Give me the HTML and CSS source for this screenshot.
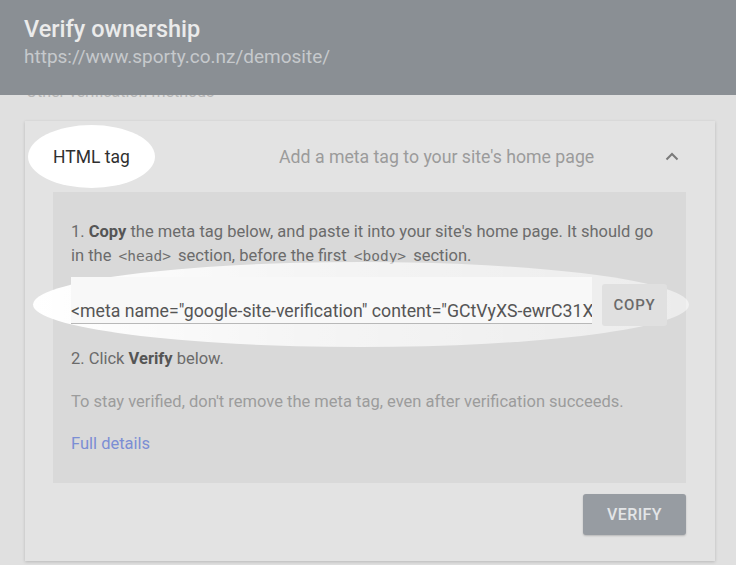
FILE: index.html
```html
<!DOCTYPE html>
<html lang="en">

<head>
    <meta charset="UTF-8">
    <meta name="viewport" content="width=device-width, initial-scale=1">
    <title>Verify ownership</title>
    <link rel="stylesheet" href="styles.css">
</head>

<body>
    <header class="topbar">
        <h1 class="topbar-title">Verify ownership</h1>
        <div class="topbar-url">https://www.sporty.co.nz/demosite/</div>
    </header>

    <!-- label scrolled mostly under the header -->
    <div class="section-peek">
        <div class="section-label">Other verification methods</div>
    </div>

    <div class="method-card">
        <div class="method-head">
            <div class="method-name">HTML tag</div>
            <div class="method-desc">Add a meta tag to your site's home page</div>
            <svg class="chevron" width="14" height="9" viewBox="0 0 14 9">
                <path d="M1.5 7.5 L7 2 L12.5 7.5" fill="none" stroke="#7a7a7a" stroke-width="2"/>
            </svg>
        </div>

        <div class="method-body">
            <p class="step">1. <b>Copy</b> the meta tag below, and paste it into your site's home page. It should go in the <code>&lt;head&gt;</code> section, before the first <code>&lt;body&gt;</code> section.</p>

            <div class="tag-row">
                <div class="tag-field">&lt;meta name="google-site-verification" content="GCtVyXS-ewrC31XqL8mPzR2aUo7hJkD4nBvYtEwF9sQ" /&gt;</div>
                <button class="copy-btn">COPY</button>
            </div>

            <p class="step step-two">2. Click <b>Verify</b> below.</p>
            <p class="note">To stay verified, don't remove the meta tag, even after verification succeeds.</p>
            <a class="details-link" href="#">Full details</a>
        </div>

        <div class="card-actions">
            <button class="verify-btn">VERIFY</button>
        </div>
    </div>
</body>

</html>
```

FILE: styles.css
```css
* {
    margin: 0;
    padding: 0;
    box-sizing: border-box;
}

body {
    font-family: Roboto, 'Noto Sans', sans-serif;
    background-color: #e0e0e0;
    width: 736px;
    height: 565px;
    overflow: hidden;
}

/* Header */
.topbar {
    height: 95px;
    background-color: #8a8f94;
    padding: 15px 24px 0;
}

.topbar-title {
    font-size: 23.5px;
    font-weight: 500;
    color: #ebebeb;
    line-height: 29px;
}

.topbar-url {
    font-size: 19px;
    color: #c6c9cc;
    line-height: 24px;
    margin-top: 1px;
}

.section-peek {
    height: 4px;
    overflow: hidden;
    padding-left: 26px;
}

.section-label {
    font-size: 16px;
    line-height: 18px;
    margin-top: -12px;
    color: #b5b5b5;
}

/* Card */
.method-card {
    margin: 22px 21px 0 25px;
    background-color: #e3e3e3;
    box-shadow: 0 1px 3px rgba(0, 0, 0, 0.18);
    padding: 0 29px 26px 28px;
}

.method-head {
    display: flex;
    align-items: center;
    padding: 4px 0;
}

.method-name {
    width: 127px;
    height: 63px;
    margin-left: -25px;
    padding-left: 25px;
    display: flex;
    align-items: center;
    background-color: #fff;
    border-radius: 50%;
    font-size: 17.5px;
    color: #2f2f2f;
}

.method-desc {
    flex: 1;
    margin-left: 124px;
    font-size: 17.7px;
    color: #9b9b9b;
}

.chevron {
    margin-right: 7px;
}

.method-body {
    background-color: #d9d9d9;
    padding: 28px 25px 27px 18px;
}

.step {
    font-size: 16.5px;
    line-height: 24px;
    color: #6b6b6b;
}

.step b {
    color: #555;
    font-weight: 700;
}

.step code {
    font-family: 'DejaVu Sans Mono', monospace;
    font-size: 14.5px;
    line-height: 1;
    padding: 0 3px;
    color: #6e6e6e;
}

/* highlighted tag row */
.tag-row {
    position: relative;
    isolation: isolate;
    display: flex;
    align-items: flex-start;
    margin-top: 9px;
}

.tag-row::before {
    content: '';
    position: absolute;
    left: -38px;
    right: -28px;
    top: -15px;
    bottom: -21px;
    border-radius: 50%;
    background: linear-gradient(90deg, #ffffff 0%, rgba(255, 255, 255, 0.75) 40%, rgba(255, 255, 255, 0.5) 100%);
    z-index: -1;
}

.tag-field {
    width: 521px;
    flex-shrink: 0;
    height: 47px;
    padding-top: 24px;
    background-color: #f8f8f8;
    border-bottom: 1px solid #b8b8b8;
    font-size: 17.7px;
    line-height: 20px;
    color: #555;
    white-space: nowrap;
    overflow: hidden;
}

.copy-btn {
    flex-shrink: 0;
    margin: 7px 0 0 10px;
    width: 65px;
    height: 42px;
    border: none;
    border-radius: 3px;
    background-color: #e0e0e0;
    font-family: inherit;
    font-size: 15px;
    font-weight: 500;
    letter-spacing: 0.8px;
    color: #6a6a6a;
}

.step-two {
    margin-top: 21px;
}

.note {
    margin-top: 19px;
    font-size: 16.5px;
    line-height: 24px;
    color: #9c9c9c;
}

.details-link {
    display: block;
    margin-top: 18px;
    font-size: 16.5px;
    line-height: 24px;
    color: #7b8ed4;
    text-decoration: none;
}

.card-actions {
    display: flex;
    justify-content: flex-end;
    padding-top: 11px;
}

.verify-btn {
    width: 103px;
    height: 41px;
    border: none;
    border-radius: 3px;
    background-color: #979ca2;
    box-shadow: 0 1px 2px rgba(0, 0, 0, 0.2);
    font-family: inherit;
    font-size: 16px;
    font-weight: 500;
    letter-spacing: 0.4px;
    color: #e3e5e7;
}
```
